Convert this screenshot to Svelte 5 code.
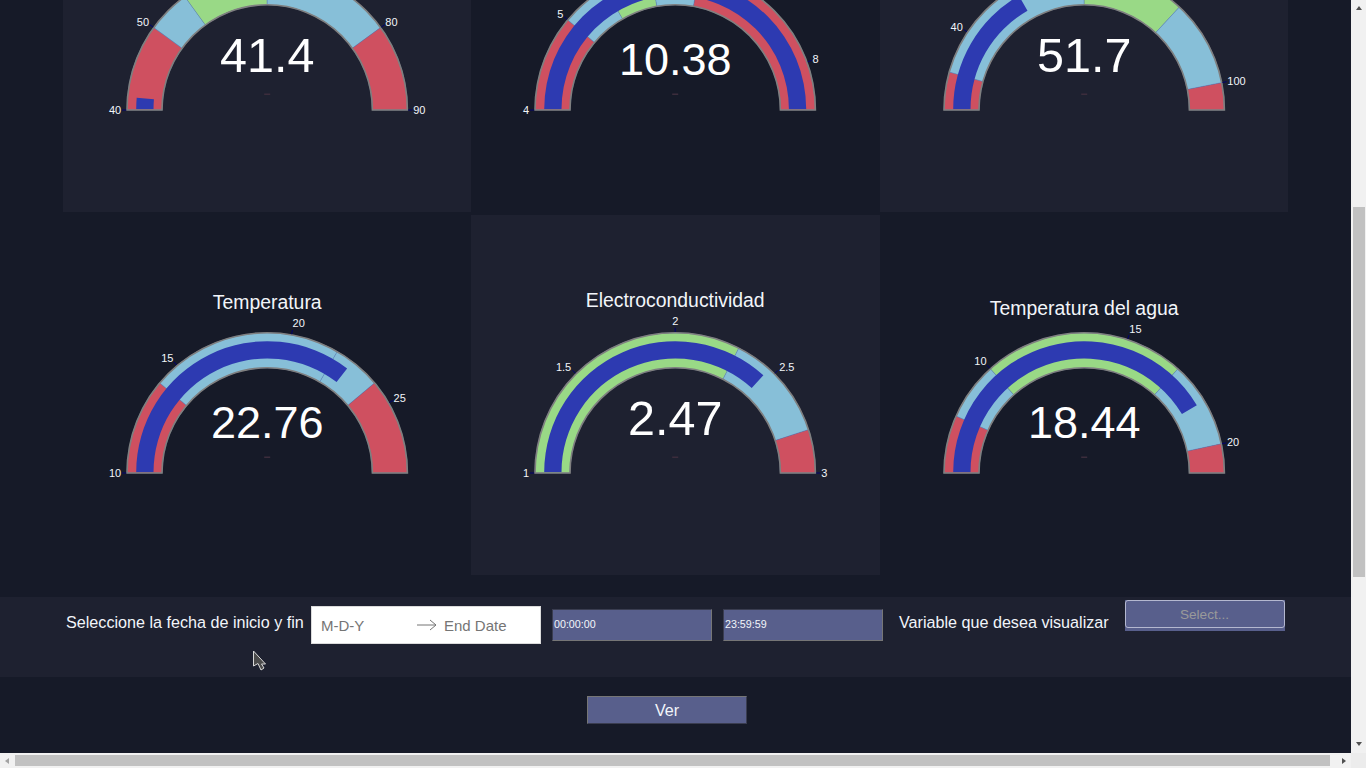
<script>
  const RED = '#cf5060'
  const BLUE = '#87bfd8'
  const GREEN = '#99d986'

  // one entry per gauge, in the order of the grid
  // ticks above the fold of the first row are left out
  const gauges = [
    {
      value: '41.4', num: 41.4, min: 40, max: 90, light: true,
      ticks: [40, 50, 80, 90],
      steps: [[40, 50, RED], [50, 55, BLUE], [55, 65, GREEN], [65, 80, BLUE], [80, 90, RED]]
    },
    {
      value: '10.38', num: 8.5, min: 4, max: 8.5, light: false,
      ticks: [4, 5, 8],
      steps: [[4, 5, RED], [5, 5.5, BLUE], [5.5, 6, GREEN], [6, 6.5, BLUE], [6.5, 8.5, RED]]
    },
    {
      value: '51.7', num: 51.7, min: 25, max: 105, light: true,
      ticks: [40, 100],
      steps: [[25, 32, RED], [32, 65, BLUE], [65, 84, GREEN], [84, 100, BLUE], [100, 105, RED]]
    },
    {
      title: 'Temperatura', titleY: 94, value: '22.76', num: 22.76, min: 10, max: 28, light: false,
      ticks: [10, 15, 20, 25],
      steps: [[10, 14, RED], [14, 22, BLUE], [22, 24, BLUE], [24, 28, RED]]
    },
    {
      title: 'Electroconductividad', titleY: 92, value: '2.47', num: 2.47, min: 1, max: 3, light: true,
      ticks: [1, 1.5, 2, 2.5, 3],
      steps: [[1, 2.3, GREEN], [2.3, 2.8, BLUE], [2.8, 3, RED]]
    },
    {
      title: 'Temperatura del agua', titleY: 100, value: '18.44', num: 18.44, min: 6, max: 21, light: false,
      ticks: [10, 15, 20],
      steps: [[6, 8, RED], [8, 10, BLUE], [10, 17, GREEN], [17, 20, BLUE], [20, 21, RED]]
    }
  ]

  const CX = 204.2
  const OUTER = 140.2
  const INNER = 105.2

  function polar(g, v, r, cy) {
    const a = Math.PI * (1 - (v - g.min) / (g.max - g.min))
    return [CX + r * Math.cos(a), cy - r * Math.sin(a)]
  }

  function sector(g, from, to, r0, r1, cy) {
    const [x0, y0] = polar(g, from, r1, cy)
    const [x1, y1] = polar(g, to, r1, cy)
    const [x2, y2] = polar(g, to, r0, cy)
    const [x3, y3] = polar(g, from, r0, cy)
    return `M${x0} ${y0}A${r1} ${r1} 0 0 1 ${x1} ${y1}L${x2} ${y2}A${r0} ${r0} 0 0 0 ${x3} ${y3}Z`
  }

  // the label box sits beside the tick, centred only when the tick points straight up
  function tickLabel(g, t, cy) {
    const a = Math.PI * (1 - (t - g.min) / (g.max - g.min))
    const cos = Math.cos(a)
    const sin = Math.sin(a)
    const text = String(t)
    const half = text.includes('.') ? 8.4 : text.length * 3.05
    const side = Math.abs(cos) < 0.01 ? 0 : Math.sign(cos) * half
    return [CX + 146 * cos + side, cy - 146.5 * sin - 5.5 * sin * sin + 4]
  }
</script>

<div class="window">
  <main class="content">
    <div class="grid">
      {#each gauges as g, i}
        {@const cy = i < 3 ? 110 : 258}
        <div class="cell" class:light={g.light}>
          <svg width="100%" height="100%">
            {#if g.title}
              <text class="title" x={CX} y={g.titleY}>{g.title}</text>
            {/if}
            {#each g.steps as s}
              <path d={sector(g, s[0], s[1], INNER, OUTER, cy)} fill={s[2]} stroke="#5f86c8" stroke-width="0.4" />
            {/each}
            <path d={sector(g, g.min, g.num, 113.7, 131, cy - 0.8)} fill="#2d3ab1" />
            <path d={sector(g, g.min, g.max, INNER, OUTER, cy)} fill="none" stroke="#7f7f7f" stroke-width="1.6" />
            {#each g.ticks as t}
              {@const p0 = polar(g, t, OUTER + 0.8, cy)}
              {@const p1 = polar(g, t, OUTER + 5, cy)}
              {@const l = tickLabel(g, t, cy)}
              <line x1={p0[0]} y1={p0[1]} x2={p1[0]} y2={p1[1]} stroke="#00006e" />
              <text class="tick" x={l[0]} y={l[1]}>{t}</text>
            {/each}
            <text class="value" class:long={g.value.length > 4} x={CX} y={cy - (g.value.length > 4 ? 35 : 38)}>{g.value}</text>
            <rect x={CX - 3} y={cy - 16.5} width="6" height="1.5" fill="#3c2d3c" />
          </svg>
        </div>
      {/each}
    </div>

    <div class="filters">
      <span class="label first">Seleccione la fecha de inicio y fin</span>
      <div class="dates">
        <span class="start">M-D-Y</span>
        <svg class="arrow" width="20" height="12" viewBox="0 0 20 12">
          <path d="M0 6H19M13 1l6 5-6 5" fill="none" stroke="#757575" stroke-width="1" />
        </svg>
        <span>End Date</span>
      </div>
      <div class="time">00:00:00</div>
      <div class="time">23:59:59</div>
      <span class="label second">Variable que desea visualizar</span>
      <div class="select"><div class="select-box">Select...</div></div>
    </div>

    <div class="actions">
      <button class="ver">Ver</button>
    </div>

    <svg class="cursor" width="16" height="24" viewBox="0 0 16 24">
      <path d="M1.500 1V16L6 13.500L9 20L12 18L9.500 14H13.500Z" fill="#4b4b4b" stroke="#d8d8d8" stroke-width="1" />
    </svg>
  </main>

  <div class="vbar">
    <span class="arrow-up"></span>
    <div class="vthumb"></div>
    <span class="arrow-down"></span>
  </div>
  <div class="hbar">
    <span class="arrow-left"></span>
    <div class="hthumb"></div>
    <span class="arrow-right"></span>
  </div>
  <div class="corner"></div>
</div>

<style>
  :global(body) {
    background: #161a28;
    overflow: hidden;
  }

  .window {
    display: grid;
    grid-template-columns: 1351px 15px;
    grid-template-rows: 753px 15px;
    height: 768px;
    font-family: "Liberation Sans", Arial, sans-serif;
  }

  .content {
    position: relative;
    overflow: hidden;
    background: #161a28;
  }

  .grid {
    display: grid;
    grid-template-columns: repeat(3, 1fr);
    grid-template-rows: 212px 360px;
    row-gap: 3px;
    width: 1225px;
    margin-left: 63px;
  }

  .cell {
    overflow: hidden;
  }
  .cell svg {
    display: block;
  }
  .light {
    background: #1e2130;
  }

  .title {
    fill: #f2f5fa;
    font-size: 19.400px;
    text-anchor: middle;
  }
  .tick {
    fill: #f2f5fa;
    font-size: 11px;
    text-anchor: middle;
  }
  .value {
    fill: #fff;
    font-size: 48.500px;
    text-anchor: middle;
  }
  .value.long {
    font-size: 45px;
  }

  .filters {
    display: flex;
    align-items: flex-start;
    height: 80px;
    margin-top: 22px;
    background: #1e2130;
    color: #f2f5fa;
    font-size: 16.150px;
  }

  .label {
    margin-top: 16px;
    line-height: 18px;
    white-space: nowrap;
  }
  .first {
    margin-left: 66px;
    width: 245px;
  }
  .second {
    margin-left: 16px;
    width: 226px;
  }

  .dates {
    display: flex;
    align-items: center;
    box-sizing: border-box;
    width: 230px;
    height: 38px;
    margin-top: 9px;
    padding: 0 0 0 9px;
    background: #fff;
    border: 1px solid #dbdbdb;
    color: #757575;
    font-size: 15px;
  }
  .start {
    width: 96px;
  }
  .arrow {
    margin-right: 7px;
  }

  .time {
    box-sizing: border-box;
    width: 160px;
    height: 32px;
    margin: 12px 0 0 11px;
    padding-left: 1px;
    background: #585f8c;
    border: 1px solid;
    border-color: #3a3d50 #767676 #767676 #3a3d50;
    font-size: 10.700px;
    line-height: 28px;
  }

  .select {
    width: 160px;
    height: 31px;
    margin-top: 3px;
    background: #585f8c;
  }
  .select-box {
    box-sizing: border-box;
    height: 28px;
    padding-right: 1px;
    border: 1px solid #b4b8d0;
    border-radius: 3px;
    color: #9a9a9a;
    font-size: 13.600px;
    line-height: 28px;
    text-align: center;
  }

  .actions {
    display: flex;
    justify-content: center;
    padding: 19px 17px 0 0;
  }
  .ver {
    width: 160px;
    height: 28px;
    padding: 1px 0 0;
    background: #585f8c;
    border: 1px solid;
    border-color: #767676 #3a3d50 #3a3d50 #767676;
    color: #f2f5fa;
    font: 16.150px "Liberation Sans", Arial, sans-serif;
  }

  .cursor {
    position: absolute;
    left: 252px;
    top: 650px;
  }

  .vbar {
    display: flex;
    flex-direction: column;
    align-items: center;
    background: #f1f1f1;
  }
  .vthumb {
    width: 12px;
    height: 370px;
    margin-top: 197px;
    background: #c1c1c1;
  }
  .hbar {
    display: flex;
    align-items: center;
    background: #f1f1f1;
  }
  .hthumb {
    width: 1315px;
    height: 11px;
    margin-left: 6px;
    background: #c1c1c1;
  }
  .corner {
    background: #ececec;
  }

  .arrow-up,
  .arrow-down,
  .arrow-left,
  .arrow-right {
    width: 0;
    height: 0;
    border-style: solid;
    border-color: transparent;
  }
  .arrow-up {
    margin-top: 6px;
    border-width: 0 3.500px 4px;
    border-bottom-color: #505050;
  }
  .arrow-down {
    margin-top: 165px;
    border-width: 4px 3.500px 0;
    border-top-color: #505050;
  }
  .arrow-left {
    margin-left: 5px;
    border-width: 3.500px 4px 3.500px 0;
    border-right-color: #a3a3a3;
  }
  .arrow-right {
    margin-left: 12px;
    border-width: 3.500px 0 3.500px 4px;
    border-left-color: #505050;
  }
</style>
